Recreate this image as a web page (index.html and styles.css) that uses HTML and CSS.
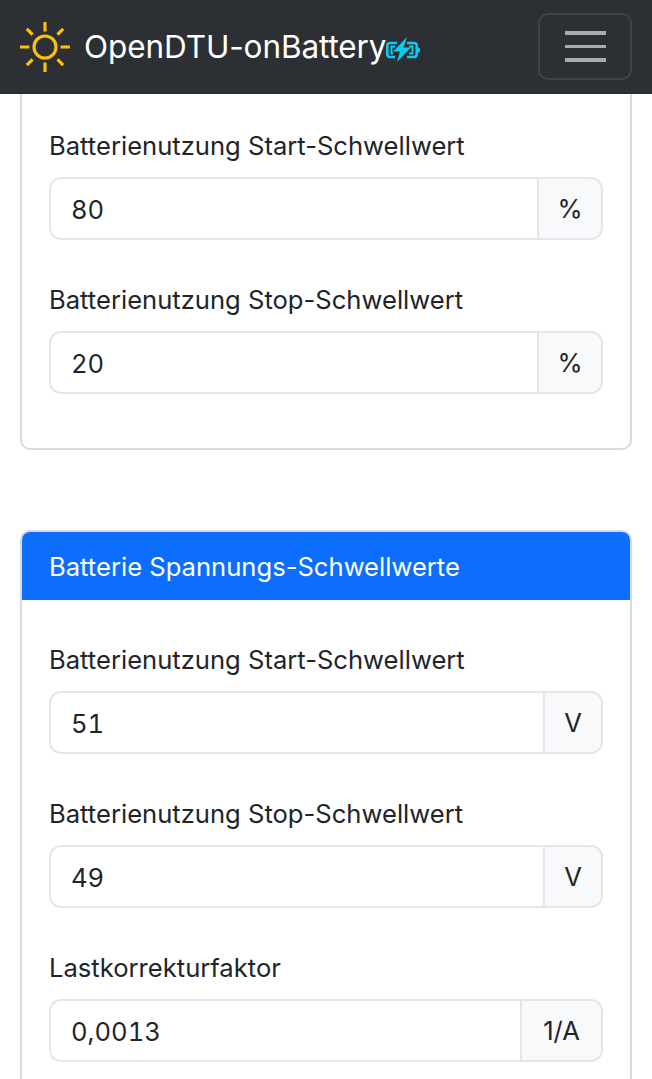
FILE: index.html
```html
<!DOCTYPE html>
<html lang="de">
<head>
<meta charset="utf-8">
<title>OpenDTU-onBattery</title>
<link rel="stylesheet" href="styles.css">
</head>
<body>
<nav class="navbar">
  <a class="brand" href="#">
    <svg class="sun" viewBox="0 0 52 52" fill="none" stroke="#ffc107" stroke-width="3" stroke-linecap="butt">
      <circle cx="26" cy="26" r="10.600"/>
      <path d="M26 2v9M26 41v9M2 26h9M41 26h9M8.500 8.500l5.500 5.500M38 38l5.500 5.500M8.500 43.500l5.500-5.500M38 14l5.500-5.500"/>
    </svg>
    <span class="brand-text">OpenDTU-onBattery</span>
    <svg class="battery" viewBox="0 0 34 25">
      <path fill="none" stroke="#0dcaf0" stroke-width="2.600" d="M11 6H4a2.700 2.700 0 0 0-2.700 2.700v8.600A2.700 2.700 0 0 0 4 20h5M21 6h7a2.700 2.700 0 0 1 2.700 2.700v8.600A2.700 2.700 0 0 1 28 20h-7"/>
      <path fill="none" stroke="#0dcaf0" stroke-width="2" d="M9 9.500H5.500v7H7M23 9.500h3.500v7H23"/>
      <path fill="#0dcaf0" d="M31.500 10.500h1a1.500 1.500 0 0 1 1.500 1.500v2a1.500 1.500 0 0 1-1.500 1.500h-1z"/>
      <path fill="#0dcaf0" d="M21 0L7 14.500h7L11 25 25 10.500h-7.500z"/>
    </svg>
  </a>
  <button class="toggler" type="button" aria-label="Menu">
    <span class="toggler-bar"></span>
    <span class="toggler-bar"></span>
    <span class="toggler-bar"></span>
  </button>
</nav>
<main class="page">
  <section class="card">
    <div class="card-body card-body-scrolled">
      <div class="field">
        <label class="field-label">Batterienutzung Start-Schwellwert</label>
        <div class="input-group">
          <input class="input" type="text" value="80">
          <span class="addon addon-pct">%</span>
        </div>
      </div>
      <div class="field">
        <label class="field-label">Batterienutzung Stop-Schwellwert</label>
        <div class="input-group">
          <input class="input" type="text" value="20">
          <span class="addon addon-pct">%</span>
        </div>
      </div>
    </div>
  </section>
  <section class="card card-open">
    <header class="card-header">Batterie Spannungs-Schwellwerte</header>
    <div class="card-body">
      <div class="field">
        <label class="field-label">Batterienutzung Start-Schwellwert</label>
        <div class="input-group">
          <input class="input" type="text" value="51">
          <span class="addon addon-v">V</span>
        </div>
      </div>
      <div class="field">
        <label class="field-label">Batterienutzung Stop-Schwellwert</label>
        <div class="input-group">
          <input class="input" type="text" value="49">
          <span class="addon addon-v">V</span>
        </div>
      </div>
      <div class="field">
        <label class="field-label">Lastkorrekturfaktor</label>
        <div class="input-group">
          <input class="input" type="text" value="0,0013">
          <span class="addon addon-a">1/A</span>
        </div>
      </div>
    </div>
  </section>
</main>
</body>
</html>
```

FILE: styles.css
```css
* {
  box-sizing: border-box;
}

html,
body {
  height: 100%;
}

body {
  margin: 0;
  overflow: hidden;
  background: #fff;
  color: #212529;
  font-family: Inter, "Liberation Sans", sans-serif;
  font-size: 25.600px;
}

.navbar {
  display: flex;
  align-items: center;
  justify-content: space-between;
  height: 94px;
  padding: 0 20px;
  background: #2c3034;
  border-bottom: 1px solid #24272a;
}

.brand {
  display: flex;
  align-items: center;
  color: #fff;
  text-decoration: none;
}

.sun {
  width: 54px;
  height: 54px;
  margin-left: -2px;
  margin-right: 12px;
  flex: none;
}

.brand-text {
  font-size: 31.500px;
  line-height: 40px;
  letter-spacing: -0.1px;
}

.battery {
  width: 34px;
  height: 25px;
  margin-top: 6px;
  flex: none;
}

.toggler {
  display: flex;
  flex-direction: column;
  align-items: center;
  justify-content: center;
  gap: 10px;
  width: 94px;
  height: 67px;
  padding: 0;
  background: transparent;
  border: 2px solid #3f4347;
  border-radius: 10px;
}

.toggler-bar {
  display: block;
  width: 41px;
  height: 3.500px;
  background: #a9abad;
}

.page {
  padding: 0 20px;
}

.card {
  background: #fff;
  border: 2px solid #dadada;
  border-top: none;
  border-radius: 0 0 10px 10px;
}

.card-open {
  margin-top: 80px;
  border-top: 2px solid #dadada;
  border-radius: 10px;
  overflow: hidden;
}

.card-header {
  display: flex;
  align-items: center;
  height: 68px;
  padding: 0 27px;
  background: #0d6efd;
  color: #fff;
}

.card-body {
  padding: 41px 27px 13px;
}

.card-body-scrolled {
  padding-top: 33px;
}

.field {
  margin-bottom: 41px;
}

.field-label {
  display: block;
  height: 38px;
  margin-bottom: 12px;
  line-height: 38px;
}

.input-group {
  display: flex;
  height: 63px;
}

.input {
  flex: 1;
  min-width: 0;
  padding: 1px 20px 0;
  color: #212529;
  background: #fff;
  font: inherit;
  font-variant-numeric: tabular-nums;
  border: 2px solid #e3e6ea;
  border-right: none;
  border-radius: 12px 0 0 12px;
}

.addon {
  display: flex;
  align-items: center;
  justify-content: center;
  background: #f8f9fa;
  border: 2px solid #e3e6ea;
  border-radius: 0 12px 12px 0;
}

.addon-pct {
  width: 66px;
}

.addon-v {
  width: 60px;
}

.addon-a {
  width: 83px;
}
```
